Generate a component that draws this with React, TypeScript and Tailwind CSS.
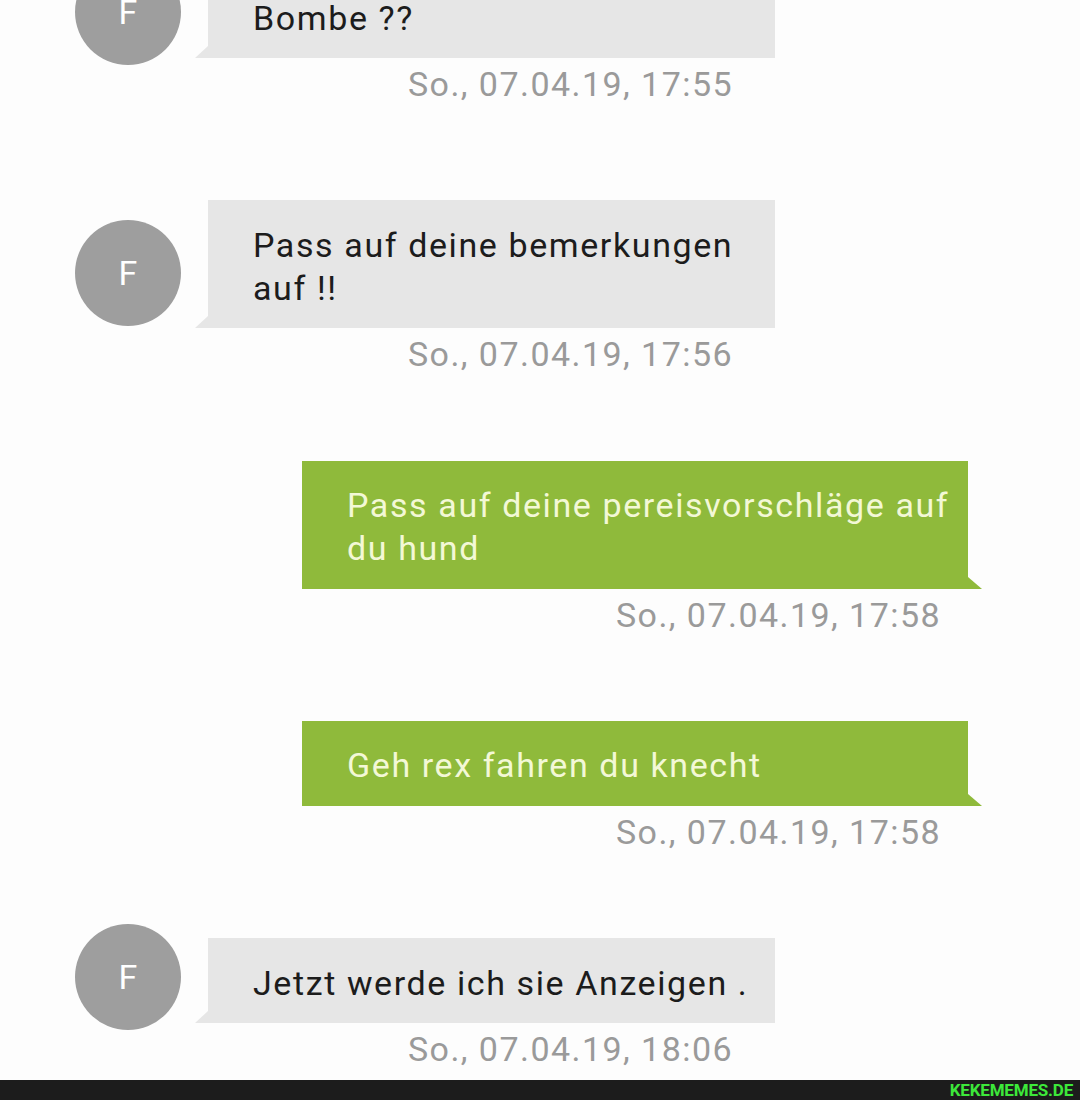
import React from "react";

const font = { fontFamily: "Roboto, 'Liberation Sans', sans-serif" };

function Avatar({ offset }: { offset: string }) {
  return (
    <div className={"w-[106px] h-[106px] mb-[-40px] rounded-full bg-[#9e9e9e] flex items-center justify-center shrink-0 " + offset}>
      <span className="text-white text-[34px] leading-none">F</span>
    </div>
  );
}

function Incoming({ lines, time, offset }: { lines: React.ReactNode; time: string; offset: string }) {
  return (
    <div>
      <div className="flex items-start pl-[75px] gap-[27px]">
        <Avatar offset={offset} />
        <div className="relative w-[567px] bg-[#e6e6e6] pl-[45px] pr-[20px] pt-[24px] pb-[18px] text-[34px] leading-[43px] tracking-[1.6px] text-[#1c1c1c] whitespace-nowrap">
          {lines}
          <svg className="absolute left-[-13px] bottom-0" width="13" height="12" viewBox="0 0 13 12">
            <polygon points="0,12 13,12 13,0" fill="#e6e6e6" />
          </svg>
        </div>
      </div>
      <div className="ml-[208px] w-[567px] pr-[42px] text-right text-[34px] leading-[40px] tracking-[1.45px] text-[#9a9a9a] mt-[6px]">
        {time}
      </div>
    </div>
  );
}

function Outgoing({ lines, time }: { lines: React.ReactNode; time: string }) {
  return (
    <div>
      <div className="relative ml-[302px] w-[666px] bg-[#8fba3b] pl-[45px] pr-[10px] pt-[23px] pb-[19px] text-[34px] leading-[43px] tracking-[1.6px] text-[#f3f8d6] whitespace-nowrap">
        {lines}
        <svg className="absolute right-[-14px] bottom-0" width="14" height="12" viewBox="0 0 14 12">
          <polygon points="0,0 0,12 14,12" fill="#8fba3b" />
        </svg>
      </div>
      <div className="ml-[302px] w-[666px] pr-[27px] text-right text-[34px] leading-[40px] tracking-[1.45px] text-[#9a9a9a] mt-[6px]">
        {time}
      </div>
    </div>
  );
}

export default function App() {
  return (
    <div className="w-[1080px] h-[1100px] flex flex-col overflow-hidden bg-white" style={font}>
      <div className="h-[1080px] overflow-hidden bg-[#fdfdfd] flex flex-col">
        <div className="mt-[-27px]">
          <Incoming offset="mt-[-14px]" lines="Bombe ??" time="So., 07.04.19, 17:55" />
        </div>
        <div className="mt-[96px]">
          <Incoming
            offset="mt-[20px]"
            lines={<>Pass auf deine bemerkungen<br />auf !!</>}
            time="So., 07.04.19, 17:56"
          />
        </div>
        <div className="mt-[87px]">
          <Outgoing
            lines={<>Pass auf deine pereisvorschläge auf<br />du hund</>}
            time="So., 07.04.19, 17:58"
          />
        </div>
        <div className="mt-[86px]">
          <Outgoing lines="Geh rex fahren du knecht" time="So., 07.04.19, 17:58" />
        </div>
        <div className="mt-[86px]">
          <Incoming offset="mt-[-14px]" lines="Jetzt werde ich sie Anzeigen ." time="So., 07.04.19, 18:06" />
        </div>
      </div>
      <div className="h-[20px] bg-[#1c1c1c] flex items-center justify-end pr-[7px]">
        <span className="text-[#3de83a] font-bold text-[17px] leading-none tracking-[-0.2px]">
          KEKEMEMES.DE
        </span>
      </div>
    </div>
  );
}
